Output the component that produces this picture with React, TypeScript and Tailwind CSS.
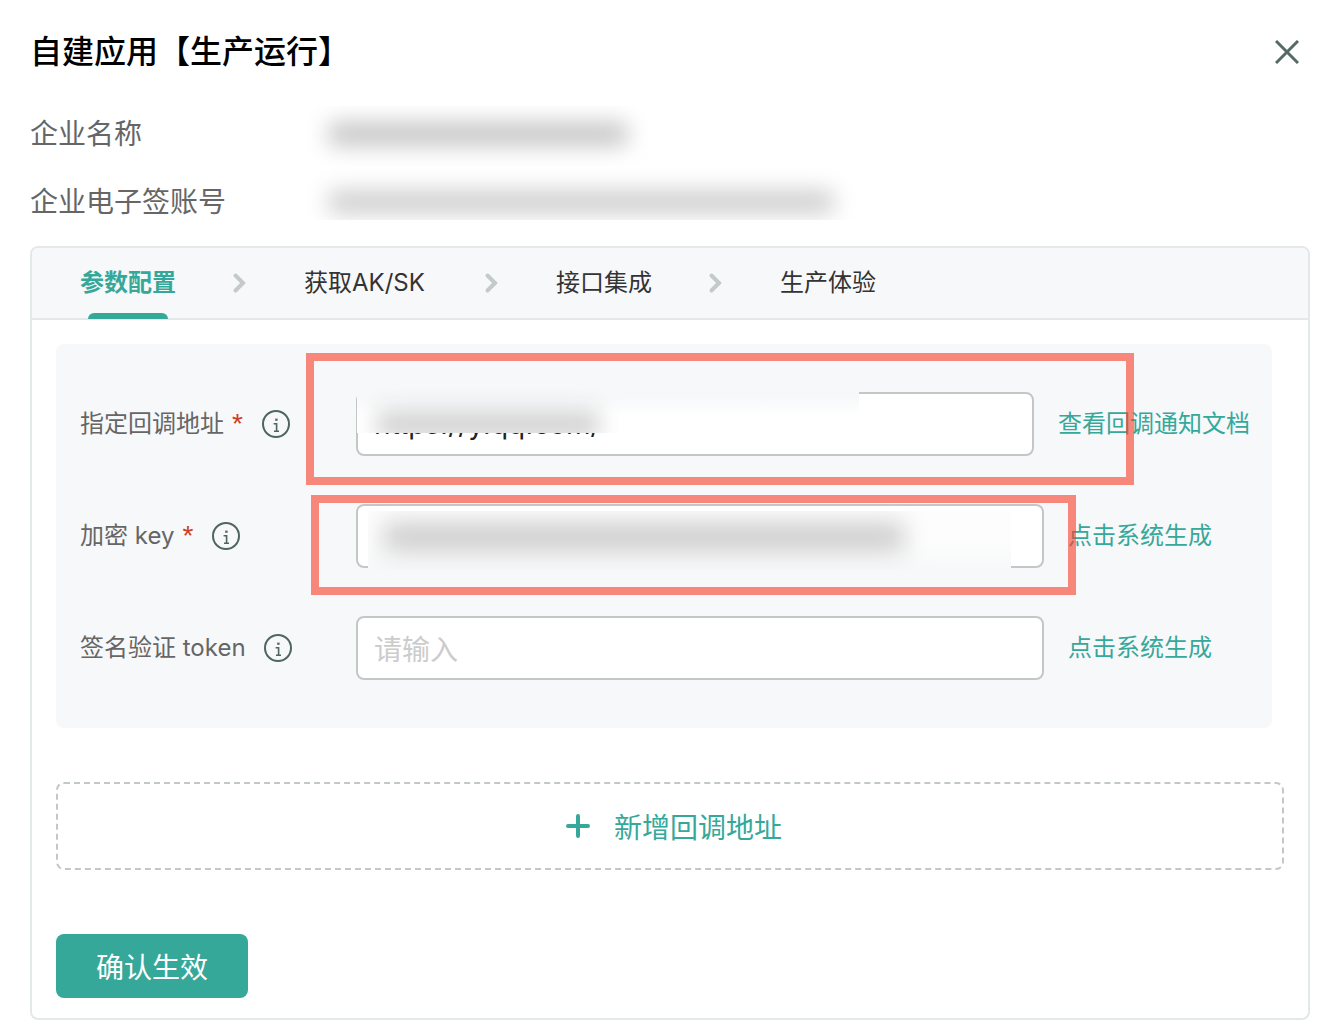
import { Fragment } from "react";
import type { ReactNode } from "react";

const steps = ["参数配置", "获取AK/SK", "接口集成", "生产体验"];

function CloseIcon() {
  return (
    <svg viewBox="0 0 24 24" className="h-6 w-6" fill="none" stroke="#566b66" strokeWidth="3">
      <path d="M1 1l22 22M23 1L1 23" />
    </svg>
  );
}

function ChevronIcon() {
  return (
    <svg viewBox="0 0 24 24" className="h-6 w-6" fill="none" stroke="#c4cac8" strokeWidth="4" strokeLinecap="round">
      <path d="M7.5 4.5L15 12l-7.5 7.5" />
    </svg>
  );
}

function InfoIcon() {
  return (
    <svg viewBox="0 0 28 28" className="h-7 w-7 shrink-0" fill="none" stroke="#4f655f" strokeWidth="2">
      <circle cx="14" cy="14" r="13" />
      <path d="M13.2 9.7h2.4" strokeWidth="2.2" />
      <path d="M11.6 13.8h3v7.4M12 21.2h5" strokeWidth="1.6" />
    </svg>
  );
}

function PlusIcon() {
  return (
    <svg viewBox="0 0 24 24" className="h-6 w-6" fill="none" stroke="#36a89a" strokeWidth="4" strokeLinecap="round">
      <path d="M12 2v20M2 12h20" />
    </svg>
  );
}

type FieldProps = {
  id: string;
  label: string;
  required?: boolean;
  value?: string;
  action: ReactNode;
  mask?: ReactNode;
  frame?: ReactNode;
};

function Field({ id, label, required, value, action, mask, frame }: FieldProps) {
  return (
    <div className="relative flex items-center">
      <div className="flex w-[276px] shrink-0 items-center gap-[18px]">
        <label htmlFor={id} className="flex gap-2 whitespace-pre text-[#666]">
          {label}
          {required && (
            <span className="w-3 font-['Liberation_Sans',sans-serif] text-[28px] leading-9 text-[#cb3f22]">*</span>
          )}
        </label>
        <InfoIcon />
      </div>
      <div className="relative max-w-[688px] min-w-0 flex-1">
        <input
          id={id}
          type="text"
          defaultValue={value}
          placeholder="请输入"
          className={
            value
              ? "h-16 w-full rounded-lg border-2 border-[#c2c8c6] bg-white px-4 text-[28px] text-[#222] outline-none"
              : "h-16 w-full rounded-lg border-2 border-[#c2c8c6] bg-white px-4 font-['Noto_Sans_CJK_SC',sans-serif] text-[28px] text-[#222] outline-none placeholder:text-[#ccc]"
          }
        />
        {mask}
      </div>
      <div className="ml-6 shrink-0 text-[#36a89a]">{action}</div>
      {frame}
    </div>
  );
}

export default function App() {
  return (
    <main className="bg-white pr-[22px] pb-3 pl-[30px] font-['Inter','Noto_Sans_CJK_SC',sans-serif] text-2xl leading-9">
      <header className="flex h-[98px] items-start justify-between pt-7">
        <h1 className="text-[32px] leading-12 font-medium text-black">自建应用【生产运行】</h1>
        <button type="button" aria-label="关闭" className="mr-[11px] flex h-12 items-center">
          <CloseIcon />
        </button>
      </header>

      <dl className="font-['Noto_Sans_CJK_SC',sans-serif] text-[28px] text-[#666]">
        <div className="flex h-[68px] items-center">
          <dt className="w-[270px]">企业名称</dt>
          <dd className="flex h-[60px] flex-1 self-end overflow-hidden pt-4 pl-7">
            <span className="h-6 w-[300px] rounded-lg bg-[#c6c6c6] blur-[11px]" />
          </dd>
        </div>
        <div className="flex h-[68px] items-center">
          <dt className="w-[270px]">企业电子签账号</dt>
          <dd className="flex h-[54px] flex-1 self-start overflow-hidden pt-6 pl-7">
            <span className="h-6 w-[506px] rounded-lg bg-[#cfcfcf] blur-[11px]" />
          </dd>
        </div>
      </dl>

      <section className="mt-3 rounded-lg border-2 border-[#e2e9e8]">
        <nav className="flex h-[72px] items-center gap-[52px] rounded-t-md border-b-2 border-[#e2e9e8] bg-[#f7f8fa] pl-12">
          {steps.map((step, i) => (
            <Fragment key={step}>
              {i > 0 && <ChevronIcon />}
              <button
                type="button"
                className={
                  i === 0
                    ? "relative h-full font-bold text-[#36a89a]"
                    : i === 1
                      ? "h-full min-w-[124px] text-left text-[#333]"
                      : "h-full text-[#333]"
                }
              >
                {step}
                {i === 0 && <span className="absolute -bottom-px left-2 h-[6px] w-20 rounded-t-lg bg-[#36a89a]" />}
              </button>
            </Fragment>
          ))}
        </nav>

        <div className="px-6 pt-6 pb-5">
          <form className="mr-3 flex flex-col gap-12 rounded-lg bg-[#f7f8fa] py-12 pr-[22px] pl-6">
            <Field
              id="callback"
              label="指定回调地址"
              required
              value="https://y.qq.com/"
              action={<a href="#docs">查看回调通知文档</a>}
              mask={
                <div className="absolute -top-1 left-px h-[45px] w-[502px] overflow-hidden bg-linear-to-b from-[#f7f8fa] from-20% to-white to-60%">
                  <div className="mt-[22px] ml-5 h-7 w-[222px] bg-[#d2d2d2] blur-[11px]" />
                </div>
              }
              frame={
                <div className="pointer-events-none absolute -top-[39px] left-[226px] h-[132px] w-[828px] border-8 border-[#f83c26]/60" />
              }
            />
            <Field
              id="secret"
              label="加密 key"
              required
              action={<button type="button">点击系统生成</button>}
              mask={
                <div className="absolute top-[7px] left-3 h-[59px] w-[643px] overflow-hidden bg-linear-to-b from-[#fdfdfd] from-50% to-[#f7f8fa]">
                  <div className="mt-3 ml-4 h-7 w-[520px] bg-[#cbcbcb] blur-[12px]" />
                </div>
              }
              frame={
                <div className="pointer-events-none absolute -top-[9px] left-[231px] h-[100px] w-[765px] border-8 border-[#f83c26]/60" />
              }
            />
            <Field id="token" label="签名验证 token" action={<button type="button">点击系统生成</button>} />
          </form>

          <button
            type="button"
            className="mt-[54px] flex h-[88px] w-full items-center justify-center gap-6 rounded-lg border-2 border-dashed border-[#c2c8c6] pl-2 font-['Noto_Sans_CJK_SC',sans-serif] text-[28px] text-[#36a89a]"
          >
            <PlusIcon />
            新增回调地址
          </button>

          <button
            type="button"
            className="mt-16 block h-16 w-48 rounded-lg bg-[#36a89a] font-['Noto_Sans_CJK_SC',sans-serif] text-[28px] text-white"
          >
            确认生效
          </button>
        </div>
      </section>
    </main>
  );
}
